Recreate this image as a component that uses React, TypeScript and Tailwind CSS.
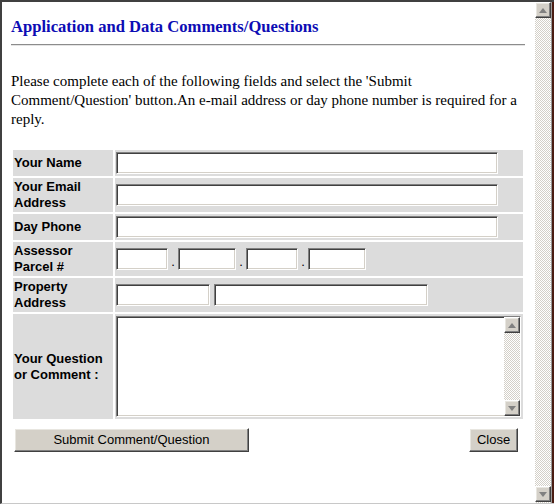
import {useState} from "react";

// classic win9x bevels
const INSET = "border border-t-[#808080] border-l-[#808080] border-b-white border-r-white shadow-[inset_1px_1px_0_#404040,inset_-1px_-1px_0_#d4d0c8] bg-white";
const OUTSET = "border border-t-white border-l-white border-b-[#404040] border-r-[#404040] shadow-[inset_-1px_-1px_0_#808080,inset_1px_1px_0_#e8e6e0] bg-[#d4d0c8]";
const CHECKER = "bg-[repeating-conic-gradient(#d4d0c8_0_25%,#ffffff_0_50%)] bg-[length:2px_2px]";

const Arrow = ({up}: {up: boolean}) => (
    <div className={`w-[16px] h-[16px] flex items-center justify-center ${OUTSET}`}>
        <svg width="8" height="5" viewBox="0 0 8 5">
            {up ? <polygon points="4,0 8,5 0,5" fill="#808080"/> : <polygon points="0,0 8,0 4,5" fill="#808080"/>}
        </svg>
    </div>
);

const Row = ({label, h, children}: {label: string, h: string, children: React.ReactNode}) => (
    <div className={`flex gap-[2px] ${h}`}>
        <div className="w-[100px] shrink-0 bg-[#dcdcdc] flex items-center pl-[1px] font-bold text-[13px] leading-4 text-black">
            {label}
        </div>
        <div className="flex-1 bg-[#dcdcdc] flex items-center pl-[1px]">
            {children}
        </div>
    </div>
);

const Field = ({w}: {w: string}) => (
    <input type="text" className={`${w} h-[22px] px-1 text-[13px] outline-none ${INSET}`}/>
);

const Dot = () => (
    <span className="w-[10px] text-center text-[13px] leading-none pt-[5px] text-black">.</span>
);

export default function App() {
    const [comment, setComment] = useState("");

    return (
        <div className="w-[554px] h-[504px] flex bg-white border-t-2 border-l-2 border-[#404040] border-b border-b-[#c8c8c8] overflow-hidden font-['Liberation_Sans',Arial,sans-serif]">
            <div className="w-[533px] shrink-0 pl-[9px] pr-[10px] flex flex-col">
                <h1 className="mt-[15px] text-[16.6px] leading-[20px] font-bold text-[#0c0cb4] font-['Liberation_Serif','Times_New_Roman',serif]">
                    Application and Data Comments/Questions
                </h1>
                <div className="mt-[7px] border-t border-t-[#8c8c8c] border-b border-b-[#e4e4e4]"/>

                <p className="mt-[26px] text-[15px] leading-[19px] text-black font-['Liberation_Serif','Times_New_Roman',serif]">
                    Please complete each of the following fields and select the 'Submit Comment/Question' button.An e-mail address or day phone number is required for a reply.
                </p>

                <div className="mt-[21px] mx-[2px] flex flex-col gap-[2px]">
                    <Row label="Your Name" h="h-[26px]">
                        <Field w="w-[382px]"/>
                    </Row>
                    <Row label="Your Email Address" h="h-[34px]">
                        <Field w="w-[382px]"/>
                    </Row>
                    <Row label="Day Phone" h="h-[26px]">
                        <Field w="w-[382px]"/>
                    </Row>
                    <Row label="Assessor Parcel #" h="h-[34px]">
                        <Field w="w-[52px]"/>
                        <Dot/>
                        <Field w="w-[58px]"/>
                        <Dot/>
                        <Field w="w-[52px]"/>
                        <Dot/>
                        <Field w="w-[58px]"/>
                    </Row>
                    <Row label="Property Address" h="h-[34px]">
                        <Field w="w-[94px]"/>
                        <div className="w-[4px]"/>
                        <Field w="w-[214px]"/>
                    </Row>
                    <Row label="Your Question or Comment :" h="h-[105px]">
                        <div className={`w-[405px] h-[101px] flex ${INSET}`}>
                            <textarea
                                value={comment}
                                onChange={e => setComment(e.target.value)}
                                className="flex-1 resize-none outline-none px-1 text-[13px]"/>
                            <div className={`w-[16px] flex flex-col justify-between ${CHECKER}`}>
                                <Arrow up/>
                                <Arrow up={false}/>
                            </div>
                        </div>
                    </Row>
                </div>

                <div className="mt-[9px] ml-[3px] mr-[7px] flex justify-between">
                    <button className={`w-[235px] h-[24px] text-[13px] text-black ${OUTSET}`}>
                        Submit Comment/Question
                    </button>
                    <button className={`w-[49px] h-[24px] text-[13px] text-black ${OUTSET}`}>
                        Close
                    </button>
                </div>
            </div>

            {/* window scrollbar */}
            <div className={`w-[16px] shrink-0 flex flex-col justify-between pb-[1px] ${CHECKER}`}>
                <Arrow up/>
                <Arrow up={false}/>
            </div>
            <div className="w-[3px] shrink-0 border-l border-l-[#9a9a9a] bg-[#4a1c12]"/>
        </div>
    );
}
